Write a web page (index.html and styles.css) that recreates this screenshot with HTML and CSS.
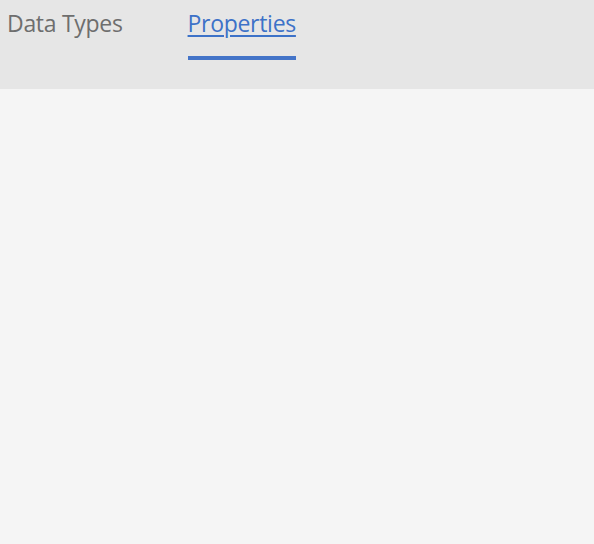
FILE: index.html
```html
<!DOCTYPE html>
<html>
<head>
<meta charset="utf-8">
<link rel="stylesheet" href="styles.css">
</head>
<body>
<div class="tabbar">
  <div class="tab">Data Types</div>
  <div class="tab active"><span class="label">Properties</span></div>
</div>
<div class="content"></div>
</body>
</html>
```
FILE: styles.css
```css
html, body {
  margin: 0;
  padding: 0;
  background: #f5f5f5;
  height: 100%;
}
body {
  font-family: "Open Sans", "Liberation Sans", sans-serif;
}
.tabbar {
  height: 89px;
  background: #e6e6e6;
  display: flex;
  align-items: flex-start;
  gap: 65px;
  padding-left: 7px;
  box-sizing: border-box;
}
.tab {
  font-size: 23px;
  line-height: 47px;
  color: #6e6e6e;
  height: 56px;
  letter-spacing: -0.3px;
}
.tab.active {
  color: #3d72c8;
  border-bottom: 4px solid #4474c8;
}
.tab.active .label {
  text-decoration: underline;
  text-underline-offset: 3px;
  text-decoration-thickness: 1.5px;
}
.content {
  background: #f5f5f5;
}
```
